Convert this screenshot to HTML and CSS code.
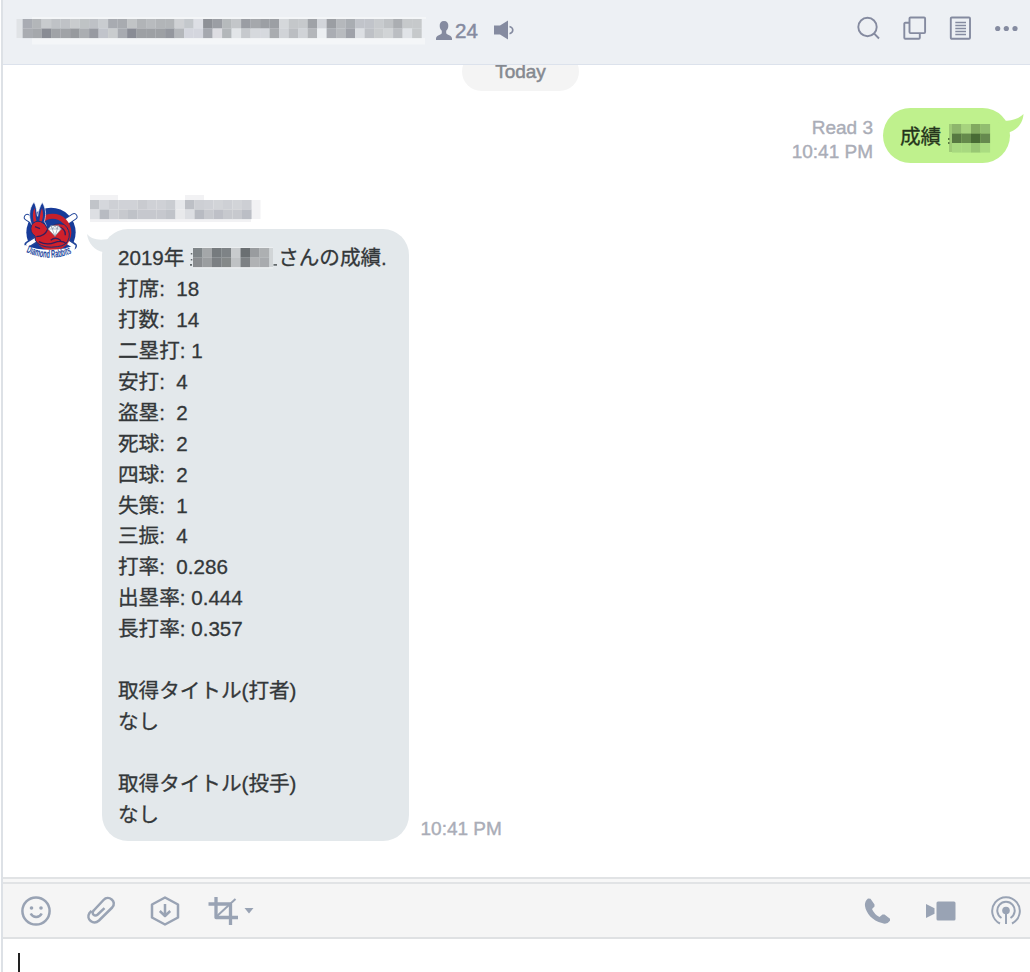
FILE: index.html
```html
<!DOCTYPE html>
<html lang="ja">
<head>
<meta charset="utf-8">
<title>Chat</title>
<link rel="stylesheet" href="styles.css">
</head>
<body>
<div class="window">
  <header class="header">
    <svg class="title" width="410" height="32" viewBox="0 0 410 32" data-x="6.6" data-y="5" data-cols="42"
      data-colors="a9acb3 b3b6b9 c8cbce bfc2c6 bfc2c6 c9ccce bfc3c5 bec1c6 c9ccd0 a8abb1 a8abb0 c1c4c6 b1b4b7 b8bbbe b2b5b8 b2b5b8 cfd1d4 c4c8cc dddfe5 8e9197 9b9ea4 b6babc c3c6c9 9a9da3 a5a8ac 9c9fa4 9c9fa4 d5d8db c4c7ca c6c9cc 9fa2a7 d2d5da 9b9ea3 b5b8bc a9adb2 c1c4ca c1c4ca c8cbce bfc2c5 abaeb2 c6c9cb c6c9cb a9acb1 a5a8ac 898c94 a0a3a7 a0a3a7 979a9e abaeb2 979aa1 c1c4cb c9ccce a8abb1 898c95 9da0a4 9da0a4 9da0a4 94979e b4b7bb d4d6de d4d6de a5a8af dddde2 b3b7ba e2e5e8 c6c9cd d6d9dd d6d9de a9acb0 d0d3d7 bbbec2 d0d3d7 b3b6ba eceff2 aaadb3 b8bbbf 9fa2a9 dcdfe3 bec1c6 c9ccce d1d4d6 bbbec2 e0e3e7 c6c9cb">
      <path fill="#f4f6f8" d="M16 3h399v2H16zM16 24h393v6.500H16z"/><path fill="#e0e3e6" d="M.5 5h6v19H.5z"/>
    </svg>
    <svg class="person" width="18" height="21" viewBox="0 0 18 21"><path fill="#858ba0" d="M9 1c-3 0-4.500 2-4.300 5 .1 2 .8 3.500 2.100 4.700v2.200C6.500 15 1 15 1 18.500V20h16v-1.500C17 15 11.500 15 11.200 12.900v-2.200C12.500 9.500 13.200 8 13.300 6 13.500 3 12 1 9 1z"/></svg>
    <span class="count">24</span>
    <svg class="speaker" width="22" height="20" viewBox="0 0 22 20"><path fill="#858ba0" d="M1 5.500h6L15 .5v19L7 14.500H1z"/><path fill="none" stroke="#858ba0" stroke-width="1.600" d="M16.500 6.400c4.400 1.200 4.400 6.200 0 7.400"/></svg>
    <nav class="tools">
      <svg width="24" height="24" viewBox="0 0 24 24"><circle cx="10.500" cy="11" r="9.200"/><path d="m17 17.300 5 5.200"/></svg>
      <svg width="24" height="24" viewBox="0 0 24 24"><rect x="6.500" y="1.500" width="15.600" height="15.600" rx="1"/><path d="M6.500 6.800H2.300q-1 0-1 1v14q0 1 1 1h13.500q1 0 1-1v-4.700"/></svg>
      <svg width="24" height="24" viewBox="0 0 24 24"><rect x="1.800" y="1.500" width="19.200" height="21.300" rx="1"/><path d="M6.300 6.500H17M6.300 9.500H17M6.300 12.500H17M6.300 15.500H17M6.300 18.500H17" stroke-width="1.300"/></svg>
      <svg width="24" height="24" viewBox="0 0 24 24"><g class="dots"><circle cx="2.700" cy="12.500" r="2.600"/><circle cx="11.300" cy="12.500" r="2.600"/><circle cx="20" cy="12.500" r="2.600"/></g></svg>
    </nav>
  </header>
  <main class="chat">
    <div class="day">Today</div>
    <section class="sent">
      <div class="meta">Read 3<br>10:41 PM</div>
      <div class="bubble green">成績
        <svg class="mask" width="44" height="30" viewBox="0 0 44 30" data-x="4" data-y="0" data-cols="4" data-colors="8eb66c a7d37e 82aa60 92bd70 577842 658a4c 486b35 66894f a8d980 a8d980 98c774 aadc81">
          <path fill="#9fcb77" d="M1 0h3v28H1z"/><path fill="#587741" d="M0 14h1.500v2H0zM0 18h1.500v2H0z"/>
        </svg>
        <svg class="tail-right" width="28" height="26" viewBox="0 0 28 26"><path d="M0 6.500c10 1 20 0 26.500-6.500C26 10 19 17 10 19z"/></svg>
      </div>
    </section>
    <section class="received">
      <svg class="avatar" width="80" height="80" viewBox="0 0 240 240">
        <defs><path id="arc" d="M48 186q72 34 140 2"/></defs>
        <circle cx="123" cy="127" r="74" fill="#173b99"/>
        <g stroke-linecap="round"><path stroke="#22469a" stroke-width="21" d="m52 82 36 23M192 80l-36 24M54 164l36-23M190 168l-36-23"/><path stroke="#fff" stroke-width="15" d="m52 82 36 23M192 80l-36 24"/><path stroke="#fff" stroke-width="11" d="m54 164 36-23M190 168l-36-23"/></g>
        <circle cx="128" cy="127" r="56" fill="#c6202b"/>
        <circle cx="128" cy="127" r="41" fill="#173b99"/>
        <path fill="#173b99" stroke="#fff" stroke-width="2" d="M68 112c-13-27-12-56 4-76 10 18 7 35 11 43 2-13 5-29 14-42 14 25 10 43 6 58 11 12 6 37-8 48z"/>
        <path fill="#d12530" d="M71 96c-4-17-3-32 3-42 3 14 2 30 6 41zM88 94c2-18 4-30 8-39 5 18 3 32-2 41z"/>
        <path fill="#cf202b" stroke="#163179" stroke-width="3" d="M65 105q10-15 27-10 15 5 21 22 21-21 49-14 20 17 15 40-5 24-35 27-38 6-59-10-10-8-8-22-18-12-10-33z"/>
        <path fill="none" stroke="#351d5c" stroke-width="4" d="M79 140q25 0 34-22M86 155q25 12 47 3t36 3M122 151q15-13 31 1M75 110l15 6M142 110q25 3 24 26"/>
        <path fill="#fff" stroke="#789" stroke-width="2" d="m114 117 9-10h22l9 10-19 22z"/><path fill="none" stroke="#8998a9" stroke-width="2" d="M114 117h40m-31-10 12 32 10-32m-22 0 5 10 7-10 6 10 4-10"/>
        <path fill="#fff" d="M43 164q70 30 154 2l-6 24q-18 18-68 22-51-2-80-30z"/>
        <text class="team"><textPath href="#arc" textLength="142" lengthAdjust="spacingAndGlyphs">Diamond Rabbits</textPath></text>
      </svg>
      <div class="content">
        <svg class="name" width="171" height="28" viewBox="0 0 171 28" data-x="0" data-y="5" data-cols="17" data-colors="c1c4c9 d5d7dc ced0d5 d0d2d7 d0d2d7 c9cbd0 cfd1d6 cfd1d6 cacdd2 e6e8eb bdc0c6 cdcfd4 cfd1d6 d2d4d8 ced0d5 d2d4d8 cdcfd4 dddfe3 b8bbc2 ced0d5 c7c9ce bfc2c8 c6c8ce c6c8ce c6c8ce c0c3c9 e8e9eb dcdee2 b8bbc2 c7c9ce bec0c7 c7c9ce c7c9ce bbbec5">
          <path fill="#f2f2f4" d="M0-1h28v6H0zM95-1h19v6H95zM0 24h161v3H0zM161.500 5h9v19h-9z"/>
        </svg>
        <div class="row">
          <div class="bubble gray"><svg class="tail-left" width="27" height="26" viewBox="0 0 27 26"><path d="M0 0c5 6 13 7 27 4L17 25l-1-7C8 17 1 9 0 0z"/></svg><div class="stats">2019年 <svg class="mask" width="88" height="22" viewBox="0 0 88 22" data-x="3" data-y="1" data-cols="8" data-colors="7f8588 a4a7a9 767b7e 7e8386 c8cbcd 6a6f72 999c9f adb0b2 8a8d90 9b9ea0 7c8083 858989 bfc2c4 7d8184 b0b2b4 a8abae"><path fill="#eceff1" d="M3 0h80v1H3zM3 20h80v1.500H3z"/><path fill="#d1d5d7" d="M79 1h4v19h-4z"/><path fill="#646a6d" d="M.8 6h1.500v1.500H.8zM.8 12h1.500v1.500H.8zM0 17h2v1.800H0zM83.500 17h3.500v1.800h-3.500z"/></svg>さんの成績.
打席:  18
打数:  14
二塁打: 1
安打:  4
盗塁:  2
死球:  2
四球:  2
失策:  1
三振:  4
打率:  0.286
出塁率: 0.444
長打率: 0.357

取得タイトル(打者)
なし

取得タイトル(投手)
なし</div></div>
          <div class="meta time">10:41 PM</div>
        </div>
      </div>
    </section>
  </main>
  <footer class="composer">
    <div class="toolbar">
      <svg width="32" height="32" viewBox="0 0 32 32"><circle cx="16" cy="16" r="13.600"/><circle class="fill" cx="11.500" cy="13" r="1.800"/><circle class="fill" cx="21" cy="13" r="1.800"/><path d="M10.700 18.500c2.200 4.600 8.800 4.600 11 0"/></svg>
      <svg width="32" height="32" viewBox="0 0 32 32"><path d="M19.500 13.700 12.700 20c-3 2.600-7-1-4-4L18.500 5.500c5-5.500 14 1.500 8.700 7.500L14 26C8.500 31 .5 25 4.500 18.500l2-2.300" transform="translate(0 -.5)"/></svg>
      <svg width="32" height="32" viewBox="0 0 32 32"><path d="m16 2.500 13 7v13l-13 7-13-7v-13zM16 9v12m-5.200-5 5.200 5 5.200-5"/></svg>
      <svg width="32" height="32" viewBox="0 0 32 32"><path d="M9 2v20.500h22M1.500 9h22v21" stroke-width="3.300"/><path d="M9 22 28.500 4" stroke-width="2"/></svg>
      <svg class="caret" width="10" height="6" viewBox="0 0 10 6"><path class="fill" d="M.5 0h9L5 5.500z"/></svg>
      <div class="calls">
        <svg width="32" height="32" viewBox="0 0 32 32"><path class="fill" d="m7 3.500 2.500.2 4 5.700v2L11 14q2 5 7.500 8l3-2.500h2l5.500 4.200v2q-3.200 4.500-8 2.300C11.500 26 5 18 4 11Q3.500 6 7 3.500z"/></svg>
        <svg width="32" height="32" viewBox="0 0 32 32"><rect class="fill" x="10.500" y="6.500" width="19" height="19" rx="1.500"/><path class="fill" d="m0 9 8.500 4.300v5.400L0 23z"/></svg>
        <svg width="32" height="32" viewBox="0 0 32 32"><path stroke-width="2" d="M10 28.500a13.800 13.800 0 1 1 12 0M11.500 23a8.700 8.700 0 1 1 9 0M16 18v11"/><circle class="fill" cx="16" cy="15.500" r="3.800"/></svg>
      </div>
    </div>
    <div class="input"><span class="cursor"></span></div>
  </footer>
</div>
<script src="mosaic.js"></script>
</body>
</html>
```
FILE: styles.css
```css
* { box-sizing: border-box; }
body { margin: 0; overflow: hidden; background: #fff; font-family: "Liberation Sans", "Noto Sans CJK JP", sans-serif; }
svg { display: block; flex: none; }
.window { display: flex; flex-direction: column; height: 972px; margin-left: 1px; border-left: 2px solid #dde1e6; }
.header { display: flex; align-items: flex-start; height: 65px; flex: none; padding: 14px 13px 0; background: #edf0f4; border-bottom: 1px solid #dce2ec; }
.person { margin: 6px 0 0 9px; }
.count { margin: 5px 0 0 2px; width: 24px; color: #858ba0; font-size: 20.500px; line-height: 24px; -webkit-text-stroke: .5px; }
.speaker { margin: 6px 0 0 14px; }
.tools { display: flex; gap: 22px; margin: 2px -2px 0 auto; }
.tools svg { fill: none; stroke: #858ba0; stroke-width: 1.900; }
.tools .dots { fill: #858ba0; stroke: none; }
.chat { height: 812px; flex: none; overflow: hidden; }
.day { width: 117px; height: 39px; margin: -13px 0 0 459px; border-radius: 20px; background: #f4f4f4; color: #858990; text-align: center; font-size: 19px; line-height: 39px; -webkit-text-stroke: .5px; }
.meta { color: #aaadb7; font-size: 19px; line-height: 24px; text-align: right; -webkit-text-stroke: .4px; }
.sent { display: flex; justify-content: flex-end; margin: 17px 20px 0 0; }
.sent .meta { margin: 8px 10px 0 0; }
.bubble { position: relative; color: #333739; font-size: 20.600px; -webkit-text-stroke: .3px; }
.green { display: flex; width: 127px; height: 55px; padding: 0 0 0 17px; border-radius: 28px; background: #bff18d; color: #25351b; line-height: 57px; }
.green .mask { margin: 16px 0 0 7px; }
.tail-right { position: absolute; right: -15px; top: 6px; fill: #bff18d; }
.received { display: flex; margin: 26px 0 0 7px; }
.content { margin-left: -.5px; }
.team { fill: #21469d; font-family: "Liberation Sans", sans-serif; font-size: 33px; font-weight: bold; }
.name { margin-top: 5px; }
.row { display: flex; align-items: flex-end; margin: 6px 0 0 12px; }
.gray { width: 307px; height: 612px; padding: 14px 0 0 16.500px; border-radius: 26px; background: #e3e8eb; }
.tail-left { position: absolute; left: -15px; top: 5px; fill: #e3e8eb; }
.stats { white-space: pre; line-height: 30.940px; }
.stats .mask { display: inline-block; vertical-align: 0; margin: -4px 0; }
.time { margin: 0 0 0 12px; }
.composer { display: flex; flex-direction: column; flex: 1; border-top: 2px solid #e1e3e5; }
.toolbar { display: flex; align-items: center; height: 60px; flex: none; padding: 5px 8px 0 17px; background: linear-gradient(#f7f7f7 3px, #e1e3e5 3px, #e1e3e5 5px, #f5f5f5 5px); border-bottom: 2px solid #dfe1e3; }
.toolbar svg { fill: none; stroke: #99a3b4; stroke-width: 2.500; stroke-linejoin: round; }
.toolbar svg + svg { margin-left: 32.500px; }
.toolbar svg:nth-child(4) { margin-left: 26px; }
.toolbar svg.caret { margin-left: 5px; }
.toolbar .fill { fill: #99a3b4; stroke: none; }
.calls { display: flex; margin-left: auto; }
.input { flex: 1; padding: 14px 0 0 15px; background: #fff; }
.cursor { display: block; width: 2px; height: 20px; background: #222; }
```
FILE: mosaic.js
```js
// Fills each masked label with its grid of colour tiles.
document.querySelectorAll("svg[data-colors]").forEach(function (svg) {
  var colors = svg.dataset.colors.split(" ");
  var cols = Number(svg.dataset.cols);
  var size = 9.5;
  colors.forEach(function (color, i) {
    var tile = document.createElementNS("http://www.w3.org/2000/svg", "rect");
    tile.setAttribute("x", Number(svg.dataset.x) + (i % cols) * size);
    tile.setAttribute("y", Number(svg.dataset.y) + Math.floor(i / cols) * size);
    tile.setAttribute("width", size + 0.1);
    tile.setAttribute("height", size + 0.1);
    tile.setAttribute("fill", "#" + color);
    svg.appendChild(tile);
  });
});
```
